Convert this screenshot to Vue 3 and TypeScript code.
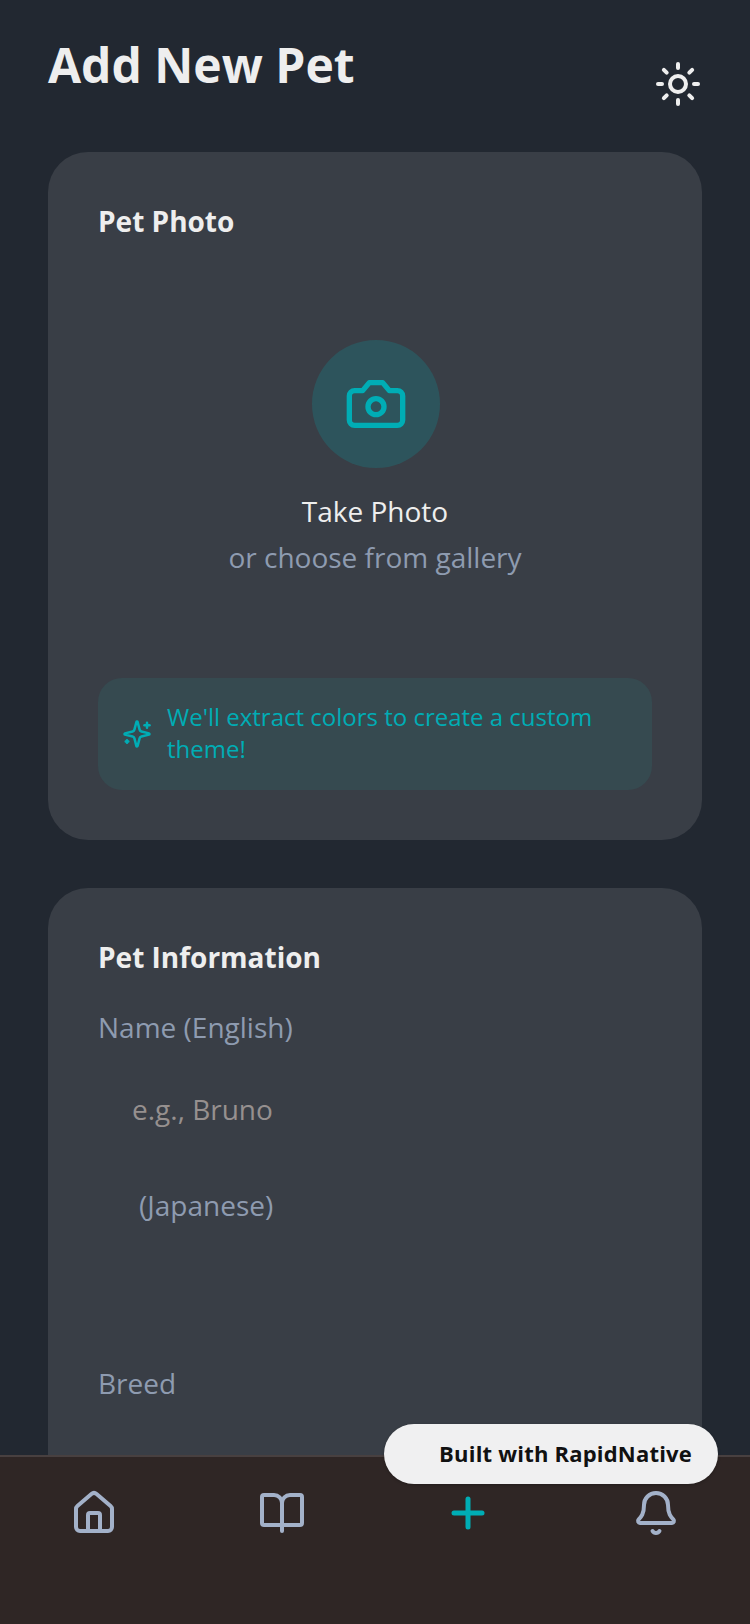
<template>
  <div class="screen">
    <div class="content">
      <div class="header">
        <h1 class="page-title">Add New Pet</h1>
        <button class="theme-btn">
          <svg width="48" height="48" viewBox="0 0 24 24" fill="none" stroke="currentColor" stroke-width="2" stroke-linecap="round" stroke-linejoin="round">
            <circle cx="12" cy="12" r="4"></circle>
            <path d="M12 2v2"></path>
            <path d="M12 20v2"></path>
            <path d="m4.93 4.93 1.41 1.41"></path>
            <path d="m17.66 17.66 1.41 1.41"></path>
            <path d="M2 12h2"></path>
            <path d="M20 12h2"></path>
            <path d="m6.34 17.66-1.41 1.41"></path>
            <path d="m19.07 4.93-1.41 1.41"></path>
          </svg>
        </button>
      </div>

      <!-- photo card -->
      <section class="card">
        <h2 class="card-title">Pet Photo</h2>
        <div class="photo-picker">
          <div class="photo-circle">
            <svg width="64" height="64" viewBox="0 0 24 24" fill="none" stroke="currentColor" stroke-width="2" stroke-linecap="round" stroke-linejoin="round">
              <path d="M14.5 4h-5L7 7H4a2 2 0 0 0-2 2v9a2 2 0 0 0 2 2h16a2 2 0 0 0 2-2V9a2 2 0 0 0-2-2h-3l-2.5-3z"></path>
              <circle cx="12" cy="13" r="3"></circle>
            </svg>
          </div>
          <div class="photo-main">Take Photo</div>
          <div class="photo-sub">or choose from gallery</div>
        </div>
        <div class="hint">
          <svg class="hint-icon" width="30" height="30" viewBox="0 0 24 24" fill="none" stroke="currentColor" stroke-width="2" stroke-linecap="round" stroke-linejoin="round">
            <path d="M9.937 15.5A2 2 0 0 0 8.5 14.063l-6.135-1.582a.5.5 0 0 1 0-.962L8.5 9.936A2 2 0 0 0 9.937 8.5l1.582-6.135a.5.5 0 0 1 .963 0L14.063 8.5A2 2 0 0 0 15.5 9.937l6.135 1.581a.5.5 0 0 1 0 .964L15.5 14.063a2 2 0 0 0-1.437 1.437l-1.582 6.135a.5.5 0 0 1-.963 0z"></path>
            <path d="M20 3v4"></path>
            <path d="M22 5h-4"></path>
            <path d="M4 17v2"></path>
            <path d="M5 18H3"></path>
          </svg>
          <span class="hint-text">We'll extract colors to create a custom theme!</span>
        </div>
      </section>

      <!-- info card -->
      <section class="card info-card">
        <h2 class="card-title">Pet Information</h2>
        <label class="field-label">Name (English)</label>
        <div class="field-input">e.g., Bruno</div>
        <label class="field-label japanese">(Japanese)</label>
        <div class="field-empty"></div>
        <label class="field-label">Breed</label>
      </section>
    </div>

    <nav class="tabbar">
      <div v-for="tab in tabs" :key="tab.name" class="tab" :class="{ active: tab.active }">
        <svg width="48" height="48" viewBox="0 0 24 24" fill="none" stroke="currentColor" :stroke-width="tab.active ? 2.5 : 2" stroke-linecap="round" stroke-linejoin="round">
          <path v-for="d in tab.paths" :key="d" :d="d"></path>
        </svg>
      </div>
    </nav>

    <div class="built-badge">Built with RapidNative</div>
  </div>
</template>

<script setup lang="ts">
interface Tab {
  name: string
  active?: boolean
  paths: string[]
}

const tabs: Tab[] = [
  {
    name: 'home',
    paths: [
      'M15 21v-8a1 1 0 0 0-1-1h-4a1 1 0 0 0-1 1v8',
      'M3 10a2 2 0 0 1 .709-1.528l7-5.999a2 2 0 0 1 2.582 0l7 5.999A2 2 0 0 1 21 10v9a2 2 0 0 1-2 2H5a2 2 0 0 1-2-2z'
    ]
  },
  {
    name: 'book',
    paths: [
      'M12 7v14',
      'M3 18a1 1 0 0 1-1-1V4a1 1 0 0 1 1-1h5a4 4 0 0 1 4 4 4 4 0 0 1 4-4h5a1 1 0 0 1 1 1v13a1 1 0 0 1-1 1z'
    ]
  },
  {
    name: 'add',
    active: true,
    paths: ['M5 12h14', 'M12 5v14']
  },
  {
    name: 'alerts',
    paths: [
      'M10.268 21a2 2 0 0 0 3.464 0',
      'M3.262 15.326A1 1 0 0 0 4 17h16a1 1 0 0 0 .74-1.673C19.41 13.956 18 12.499 18 8A6 6 0 0 0 6 8c0 4.499-1.411 5.956-2.738 7.326'
    ]
  }
]
</script>

<style>
html,
body {
  margin: 0;
  background: #222831;
}
</style>

<style scoped>
.screen {
  position: relative;
  width: 750px;
  height: 1624px;
  display: flex;
  flex-direction: column;
  overflow: hidden;
  background: #222831;
  font-family: "Open Sans", sans-serif;
}

.content {
  flex: 1;
  min-height: 0;
  overflow: hidden;
  padding: 32px 48px 0;
}

.header {
  display: flex;
  justify-content: space-between;
  align-items: flex-start;
  margin-bottom: 44px;
}

.page-title {
  margin: 0;
  font-size: 48px;
  font-weight: 700;
  line-height: 65px;
  color: #eeeeee;
}

.theme-btn {
  display: flex;
  margin-top: 28px;
  padding: 0;
  border: none;
  background: none;
  color: #eeeeee;
}

.card {
  padding: 50px;
  margin-bottom: 48px;
  border-radius: 40px;
  background: #393e46;
}

.card-title {
  margin: 0;
  font-size: 28px;
  font-weight: 700;
  line-height: 38px;
  color: #eeeeee;
}

.photo-picker {
  display: flex;
  flex-direction: column;
  align-items: center;
  padding: 100px 0 102px;
}

.photo-circle {
  display: flex;
  align-items: center;
  justify-content: center;
  width: 128px;
  height: 128px;
  margin-left: 2px;
  margin-bottom: 24px;
  border-radius: 50%;
  background: rgba(0, 173, 181, 0.2);
  color: #00adb5;
}

.photo-main {
  font-size: 28px;
  line-height: 38px;
  color: #eeeeee;
}

.photo-sub {
  margin-top: 8px;
  font-size: 28px;
  line-height: 38px;
  color: #8e9bb0;
}

.hint {
  display: flex;
  align-items: center;
  gap: 15px;
  padding: 23px 24px 25px;
  border-radius: 24px;
  background: #364a50;
  color: #00adb5;
}

.hint-icon {
  flex-shrink: 0;
  margin-top: 2px;
}

.hint-text {
  font-size: 24px;
  line-height: 32px;
}

.info-card {
  padding-bottom: 200px;
}

.field-label {
  display: block;
  margin-top: 32px;
  font-size: 28px;
  line-height: 38px;
  color: #8e9bb0;
}

.field-input {
  padding: 44px 34px 0;
  font-size: 28px;
  line-height: 38px;
  color: #96908f;
}

.field-label.japanese {
  margin-top: 58px;
  padding-left: 41px;
}

.field-empty {
  height: 108px;
}

.tabbar {
  flex-shrink: 0;
  display: grid;
  grid-template-columns: repeat(4, 1fr);
  height: 169px;
  padding-top: 32px;
  box-sizing: border-box;
  border-top: 2px solid #484040;
  background: #2f2625;
  color: #a3b1c9;
}

.tab {
  display: flex;
  justify-content: center;
  align-items: flex-start;
}

.tab:nth-child(2) svg {
  margin-left: 1px;
}

.tab.active {
  color: #00adb5;
}

.tab.active svg {
  margin-right: 1px;
}

.built-badge {
  position: absolute;
  right: 32px;
  bottom: 140px;
  width: 334px;
  height: 60px;
  box-sizing: border-box;
  padding-right: 26px;
  border-radius: 30px;
  background: #f0f0f1;
  box-shadow: 0 1px 3px rgba(0, 0, 0, 0.25);
  font-size: 22px;
  font-weight: 700;
  letter-spacing: 0.2px;
  line-height: 58px;
  text-align: right;
  color: #111;
}
</style>
